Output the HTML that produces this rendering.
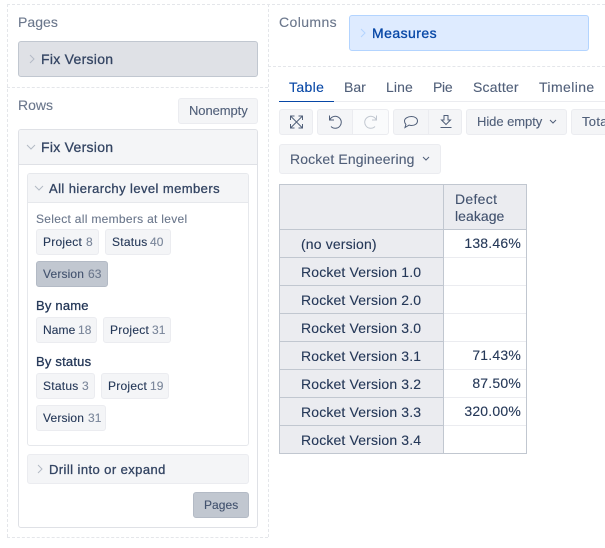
<!DOCTYPE html>
<html><head><meta charset="utf-8">
<style>
html,body{margin:0;padding:0;background:#fff;}
body{width:605px;height:548px;position:relative;overflow:hidden;font-family:"Liberation Sans",sans-serif;}
.b,.t,svg{position:absolute;box-sizing:border-box;}
.t{white-space:nowrap;height:20px;line-height:20px;-webkit-text-stroke:.12px currentColor;}
.m{-webkit-text-stroke:.3px currentColor;}
.chip{background:#f4f5f7;border:1px solid #ebecf0;border-radius:3px;}
.h{left:7px;height:0;border-top:1px dashed #e4e6ea;}
.v{width:0;border-left:1px dashed #e4e6ea;}
.r{font-size:14px;color:#253858;letter-spacing:.15px;left:301px;}
.n{font-size:14px;color:#253858;letter-spacing:.2px;right:84px;text-align:right;}
.l{font-size:12px;color:#253858;letter-spacing:.25px;}
.k{font-size:12px;color:#7a869a;letter-spacing:.1px;}
</style></head><body>

<div class="b h" style="top:4px;width:598px;"></div>
<div class="b h" style="top:87px;width:261px;"></div>
<div class="b h" style="top:537px;width:261px;"></div>
<div class="b h" style="left:268px;top:66px;width:337px;"></div>
<div class="b v" style="left:7px;top:4px;height:533px;"></div>
<div class="b v" style="left:268px;top:4px;height:533px;"></div>

<div class="t" style="left:18px;top:12px;font-size:14px;color:#6b778c;letter-spacing:.05px;">Pages</div>
<div class="b" style="left:18px;top:41px;width:240px;height:36px;background:#dfe1e6;border:1px solid #c1c7d0;border-radius:3px;"></div>
<svg style="left:28px;top:54px" width="8" height="10" fill="none" stroke="#b3bac5"><path d="M2 1l4 4-4 4"/></svg>
<div class="t m" style="left:41px;top:49px;font-size:14px;color:#344563;letter-spacing:.28px;">Fix Version</div>

<div class="t" style="left:18px;top:95px;font-size:14px;color:#6b778c;">Rows</div>
<div class="b chip" style="left:178px;top:98px;width:80px;height:26px;"></div>
<div class="t" style="left:189px;top:101px;font-size:13px;color:#505f79;letter-spacing:-.08px;">Nonempty</div>

<div class="b" style="left:18px;top:129px;width:240px;height:399px;background:#fff;border:1px solid #dfe1e6;border-radius:3px;"></div>
<div class="b" style="left:19px;top:130px;width:238px;height:35px;background:#f4f5f7;border-bottom:1px solid #dfe1e6;border-radius:2px 2px 0 0;"></div>
<svg style="left:26px;top:143px" width="10" height="8" fill="none" stroke="#b3bac5"><path d="M1 2l4 4 4-4"/></svg>
<div class="t m" style="left:41px;top:137px;font-size:14px;color:#344563;letter-spacing:.28px;">Fix Version</div>

<div class="b" style="left:27px;top:173px;width:222px;height:273px;background:#fff;border:1px solid #e6e8ec;border-radius:3px;"></div>
<div class="b" style="left:28px;top:174px;width:220px;height:29px;background:#f4f5f7;border-bottom:1px solid #e6e8ec;border-radius:2px 2px 0 0;"></div>
<svg style="left:34px;top:184px" width="10" height="8" fill="none" stroke="#b3bac5"><path d="M1 2l4 4 4-4"/></svg>
<div class="t m" style="left:49px;top:179px;font-size:13px;color:#344563;letter-spacing:.42px;">All hierarchy level members</div>

<div class="t" style="left:36px;top:209px;font-size:12px;color:#6b778c;letter-spacing:.3px;">Select all members at level</div>

<div class="b chip" style="left:36px;top:229px;width:63px;height:26px;"></div>
<div class="t l" style="left:43px;top:232px;">Project</div><div class="t k" style="left:86px;top:232px;">8</div>
<div class="b chip" style="left:105px;top:229px;width:66px;height:26px;"></div>
<div class="t l" style="left:112px;top:232px;">Status</div><div class="t k" style="left:150px;top:232px;">40</div>
<div class="b" style="left:36px;top:261px;width:72px;height:26px;background:#c1c7d0;border:1px solid #b3bac5;border-radius:3px;"></div>
<div class="t l" style="left:43px;top:264px;color:#42526e;letter-spacing:.15px;">Version</div><div class="t k" style="left:88px;top:264px;color:#6b778c;">63</div>

<div class="t m" style="left:36px;top:296px;font-size:13px;color:#253858;letter-spacing:.2px;">By name</div>
<div class="b chip" style="left:36px;top:317px;width:61px;height:26px;"></div>
<div class="t l" style="left:43px;top:320px;letter-spacing:.1px;">Name</div><div class="t k" style="left:78px;top:320px;">18</div>
<div class="b chip" style="left:103px;top:317px;width:68px;height:26px;"></div>
<div class="t l" style="left:110px;top:320px;">Project</div><div class="t k" style="left:152px;top:320px;">31</div>

<div class="t m" style="left:36px;top:352px;font-size:13px;color:#253858;letter-spacing:.2px;">By status</div>
<div class="b chip" style="left:36px;top:373px;width:59px;height:26px;"></div>
<div class="t l" style="left:43px;top:376px;">Status</div><div class="t k" style="left:82px;top:376px;">3</div>
<div class="b chip" style="left:101px;top:373px;width:68px;height:26px;"></div>
<div class="t l" style="left:108px;top:376px;">Project</div><div class="t k" style="left:150px;top:376px;">19</div>
<div class="b chip" style="left:36px;top:405px;width:70px;height:26px;"></div>
<div class="t l" style="left:43px;top:408px;letter-spacing:.15px;">Version</div><div class="t k" style="left:88px;top:408px;">31</div>

<div class="b chip" style="left:27px;top:454px;width:222px;height:30px;"></div>
<svg style="left:36px;top:464px" width="8" height="10" fill="none" stroke="#b3bac5"><path d="M2 1l4 4-4 4"/></svg>
<div class="t m" style="left:49px;top:460px;font-size:13px;color:#344563;letter-spacing:.42px;">Drill into or expand</div>

<div class="b" style="left:193px;top:492px;width:56px;height:26px;background:#c1c7d0;border:1px solid #b3bac5;border-radius:3px;"></div>
<div class="t" style="left:204px;top:495px;font-size:12px;color:#42526e;letter-spacing:.05px;">Pages</div>

<div class="t" style="left:279px;top:12px;font-size:14px;color:#6b778c;letter-spacing:.4px;">Columns</div>
<div class="b" style="left:349px;top:15px;width:240px;height:36px;background:#deebff;border:1px solid #b3d4ff;border-radius:3px;"></div>
<svg style="left:359px;top:28px" width="8" height="10" fill="none" stroke="#b3d4ff"><path d="M2 1l4 4-4 4"/></svg>
<div class="t m" style="left:372px;top:23px;font-size:14px;color:#0747a6;letter-spacing:.45px;">Measures</div>

<div class="b" style="left:279px;top:101px;width:326px;height:1px;background:#ebecf0;"></div>
<div class="b" style="left:279px;top:101px;width:55px;height:1px;background:#0747a6;"></div>
<div class="t" style="left:289px;top:77px;font-size:14px;color:#0747a6;letter-spacing:.35px;">Table</div>
<div class="t" style="left:344px;top:77px;font-size:14px;color:#505f79;letter-spacing:0;">Bar</div>
<div class="t" style="left:386px;top:77px;font-size:14px;color:#505f79;letter-spacing:.1px;">Line</div>
<div class="t" style="left:433px;top:77px;font-size:14px;color:#505f79;letter-spacing:-.3px;">Pie</div>
<div class="t" style="left:473px;top:77px;font-size:14px;color:#505f79;letter-spacing:.2px;">Scatter</div>
<div class="t" style="left:539px;top:77px;font-size:14px;color:#505f79;letter-spacing:.4px;">Timeline</div>

<div class="b chip" style="left:279px;top:109px;width:34px;height:26px;"></div>
<svg style="left:288px;top:114px" width="16" height="16" fill="none" stroke="#505f79" stroke-width="1"><path d="M3 2.500l11 11M14 2.500l-11 11M2.500 6V2h4M10.500 2h4v4M2.500 10v4h4M14.500 10v4h-4"/></svg>

<div class="b chip" style="left:317px;top:109px;width:36px;height:26px;border-radius:3px 0 0 3px;"></div>
<svg style="left:327px;top:114px" width="16" height="16" fill="none" stroke="#505f79" stroke-width="1"><path d="M2.500 1.500v4.500h4.500M2.800 5.800A6 6 0 1 1 4 12.500"/></svg>
<div class="b" style="left:352px;top:109px;width:37px;height:26px;background:#fafbfc;border:1px solid #ebecf0;border-radius:0 3px 3px 0;"></div>
<svg style="left:363px;top:114px" width="16" height="16" fill="none" stroke="#c1c7d0" stroke-width="1"><path d="M13.500 1.500v4.500h-4.500M13.200 5.800A6 6 0 1 0 12 12.500"/></svg>

<div class="b chip" style="left:393px;top:109px;width:36px;height:26px;border-radius:3px 0 0 3px;"></div>
<svg style="left:403px;top:114px" width="16" height="16" fill="none" stroke="#505f79" stroke-width="1"><path d="M8.500 2.500c3.500 0 6 1.900 6 4.500s-2.500 4.500-6 4.500c-.9 0-1.700-.1-2.400-.4L2 13.500l.9-3C2 9.500 1.500 8.400 1.500 7c0-2.600 3.200-4.500 7-4.500z"/></svg>
<div class="b chip" style="left:428px;top:109px;width:34px;height:26px;border-radius:0 3px 3px 0;"></div>
<svg style="left:438px;top:114px" width="16" height="16" fill="none" stroke="#505f79" stroke-width="1"><path d="M6 1.500h4v4.500h2.500L8 10.500 3.500 6H6zM2.500 13.500h11"/></svg>

<div class="b chip" style="left:466px;top:109px;width:101px;height:26px;"></div>
<div class="t" style="left:477px;top:112px;font-size:13px;color:#505f79;letter-spacing:-.05px;">Hide empty</div>
<svg style="left:548px;top:118px" width="10" height="8" fill="none" stroke="#505f79"><path d="M2 2l3 3 3-3"/></svg>

<div class="b chip" style="left:571px;top:109px;width:60px;height:26px;"></div>
<div class="t" style="left:582px;top:112px;font-size:13px;color:#505f79;letter-spacing:.3px;">Tota</div>

<div class="b chip" style="left:279px;top:144px;width:162px;height:30px;"></div>
<div class="t" style="left:290px;top:149px;font-size:14px;color:#505f79;letter-spacing:.13px;">Rocket Engineering</div>
<svg style="left:421px;top:155px" width="10" height="8" fill="none" stroke="#505f79"><path d="M2 2l3 3 3-3"/></svg>

<div class="b" style="left:279px;top:184px;width:248px;height:270px;background:#fff;border:1px solid #c1c7d0;"></div>
<div class="b" style="left:280px;top:185px;width:163px;height:268px;background:#ebecf0;"></div>
<div class="b" style="left:444px;top:185px;width:82px;height:45px;background:#ebecf0;"></div>
<div class="b" style="left:443px;top:185px;width:1px;height:268px;background:#c1c7d0;"></div>
<div class="b" style="left:280px;top:229px;width:246px;height:1px;background:#c1c7d0;"></div>
<div class="b" style="left:280px;top:257px;width:163px;height:1px;background:#c1c7d0;"></div>
<div class="b" style="left:280px;top:285px;width:163px;height:1px;background:#c1c7d0;"></div>
<div class="b" style="left:280px;top:313px;width:163px;height:1px;background:#c1c7d0;"></div>
<div class="b" style="left:280px;top:341px;width:163px;height:1px;background:#c1c7d0;"></div>
<div class="b" style="left:280px;top:369px;width:163px;height:1px;background:#c1c7d0;"></div>
<div class="b" style="left:280px;top:397px;width:163px;height:1px;background:#c1c7d0;"></div>
<div class="b" style="left:280px;top:425px;width:163px;height:1px;background:#c1c7d0;"></div>
<div class="b" style="left:444px;top:257px;width:82px;height:1px;background:#ebecf0;"></div>
<div class="b" style="left:444px;top:285px;width:82px;height:1px;background:#ebecf0;"></div>
<div class="b" style="left:444px;top:313px;width:82px;height:1px;background:#ebecf0;"></div>
<div class="b" style="left:444px;top:341px;width:82px;height:1px;background:#ebecf0;"></div>
<div class="b" style="left:444px;top:369px;width:82px;height:1px;background:#ebecf0;"></div>
<div class="b" style="left:444px;top:397px;width:82px;height:1px;background:#ebecf0;"></div>
<div class="b" style="left:444px;top:425px;width:82px;height:1px;background:#ebecf0;"></div>

<div class="t" style="left:455px;top:189px;font-size:14px;color:#42526e;letter-spacing:.3px;">Defect</div>
<div class="t" style="left:455px;top:206px;font-size:14px;color:#42526e;letter-spacing:.05px;">leakage</div>

<div class="t r" style="top:234px;">(no version)</div>
<div class="t r" style="top:262px;">Rocket Version 1.0</div>
<div class="t r" style="top:290px;">Rocket Version 2.0</div>
<div class="t r" style="top:318px;">Rocket Version 3.0</div>
<div class="t r" style="top:346px;">Rocket Version 3.1</div>
<div class="t r" style="top:374px;">Rocket Version 3.2</div>
<div class="t r" style="top:402px;">Rocket Version 3.3</div>
<div class="t r" style="top:430px;">Rocket Version 3.4</div>

<div class="t n" style="top:233px;">138.46%</div>
<div class="t n" style="top:345px;">71.43%</div>
<div class="t n" style="top:373px;">87.50%</div>
<div class="t n" style="top:401px;">320.00%</div>

</body></html>
